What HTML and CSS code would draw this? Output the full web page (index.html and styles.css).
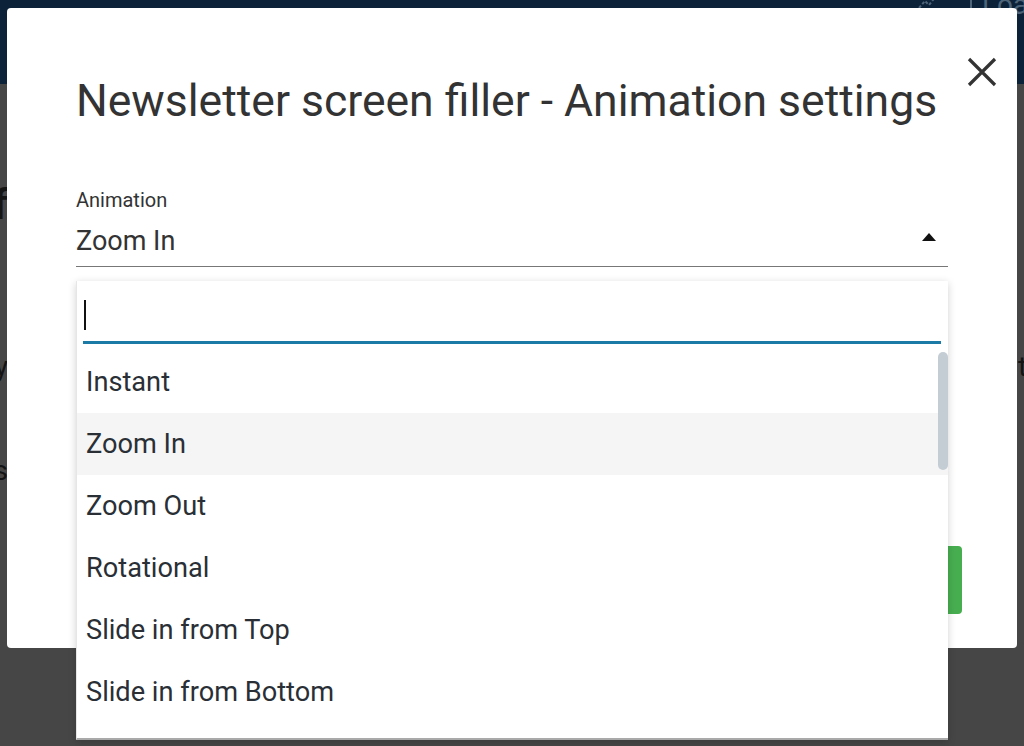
FILE: index.html
```html
<!DOCTYPE html>
<html lang="en">
<head>
<meta charset="utf-8">
<title>Newsletter screen filler - Animation settings</title>
<link rel="stylesheet" href="styles.css">
</head>
<body>
  <header class="topbar">
    <div class="topbar-tools">
      <svg class="chart-icon" width="22" height="20" viewBox="0 0 22 20"><path d="M1 16 L7 9 L11 13 L19 3" fill="none" stroke="#4d6479" stroke-width="2" stroke-dasharray="3 2"/></svg>
      <span class="divider"></span>
      <span class="load">Load</span>
    </div>
  </header>

  <main class="page">
    <div class="row row-1"><span class="frag-left big">Of</span></div>
    <div class="row row-2"><span class="frag-left mid">Day</span><span class="frag-right mid">to</span></div>
    <div class="row row-3"><span class="frag-left mid">Items</span></div>
  </main>

  <section class="modal">
    <button class="close" aria-label="Close">
      <svg width="30" height="30" viewBox="0 0 30 30"><path d="M2 2 L28 28 M28 2 L2 28" stroke="#333" stroke-width="3.2" stroke-linecap="butt"/></svg>
    </button>
    <h1 class="title">Newsletter screen filler - Animation settings</h1>
    <div class="field">
      <label class="field-label">Animation</label>
      <div class="select">
        <span class="select-value">Zoom In</span>
        <span class="caret-up"></span>
      </div>
    </div>
    <div class="footer">
      <button class="save">Save</button>
    </div>
  </section>

  <div class="dropdown">
    <div class="search"><span class="text-cursor"></span></div>
    <div class="list-wrap">
      <ul class="list">
        <li>Instant</li>
        <li class="active">Zoom In</li>
        <li>Zoom Out</li>
        <li>Rotational</li>
        <li>Slide in from Top</li>
        <li>Slide in from Bottom</li>
        <li>Slide in from Left</li>
        <li>Slide in from Right</li>
      </ul>
      <div class="thumb"></div>
    </div>
  </div>
</body>
</html>
```

FILE: styles.css
```css
* { box-sizing: border-box; }
html, body { margin: 0; padding: 0; }
body {
  width: 1024px;
  height: 746px;
  overflow: hidden;
  background: #464646;
  font-family: Roboto, "Noto Sans", Arial, sans-serif;
  position: relative;
}

.topbar {
  height: 84px;
  background: #0c2238;
  display: flex;
  justify-content: flex-end;
}
.topbar-tools {
  display: flex;
  align-items: flex-start;
  margin-right: -20px;
  margin-top: -10px;
  gap: 10px;
}
.chart-icon { margin-top: 2px; margin-right: 20px; }
.divider { width: 2px; height: 30px; background: #4d6479; margin-top: 2px; }
.load { color: #4d6479; font-size: 28px; line-height: 30px; }

.page { color: #141414; }
.row { display: flex; justify-content: space-between; }
.frag-left {
  width: 200px;
  margin-left: -192px;
  text-align: right;
  white-space: nowrap;
}
.frag-right {
  width: 200px;
  margin-right: -194px;
  text-align: left;
  white-space: nowrap;
}
.big { font-size: 42px; line-height: 50px; font-weight: 500; }
.mid { font-size: 28px; line-height: 34px; }
.row-1 { margin-top: 96px; }
.row-2 { margin-top: 120px; }
.row-3 { margin-top: 70px; }

.modal {
  position: absolute;
  left: 7px;
  top: 8px;
  width: 1010px;
  height: 640px;
  background: #fff;
  border-radius: 4px;
  padding: 67px 69px 34px;
  display: flex;
  flex-direction: column;
}
.close {
  position: absolute;
  right: 20px;
  top: 49px;
  width: 30px;
  height: 30px;
  padding: 0;
  border: 0;
  background: none;
}
.close svg { display: block; }

.title {
  margin: 0;
  font-size: 44.5px;
  line-height: 52px;
  font-weight: 400;
  color: #333;
  white-space: nowrap;
}

.field { margin-top: 61px; }
.field-label {
  display: block;
  font-size: 20px;
  line-height: 24px;
  color: #333;
}
.select {
  margin-top: 13px;
  display: flex;
  justify-content: space-between;
  align-items: flex-start;
  padding-bottom: 9px;
  border-bottom: 1px solid #777;
}
.select-value {
  font-size: 27px;
  line-height: 32px;
  color: #333;
}
.caret-up {
  width: 0;
  height: 0;
  border-left: 7px solid transparent;
  border-right: 7px solid transparent;
  border-bottom: 8px solid #111;
  margin-top: 8px;
  margin-right: 12px;
}

.footer {
  margin-top: auto;
  display: flex;
  justify-content: flex-end;
  margin-right: -14px;
}
.save {
  width: 150px;
  height: 68px;
  border: 0;
  border-radius: 4px;
  background: #47ae50;
  color: #fff;
  font-family: inherit;
  font-size: 22px;
}

.dropdown {
  position: absolute;
  left: 76px;
  top: 281px;
  width: 872px;
  height: 459px;
  background: #fff;
  border-left: 1px solid #e6e6e6;
  border-bottom: 2px solid #a9a9a9;
  box-shadow: 0 2px 8px rgba(0, 0, 0, 0.18);
  display: flex;
  flex-direction: column;
}
.search {
  margin: 7px 7px 0 6px;
  height: 56px;
  border-bottom: 3px solid #1b7aa6;
  padding-left: 1px;
}
.text-cursor {
  display: block;
  width: 2px;
  height: 30px;
  margin-top: 12px;
  background: #111;
}
.list-wrap {
  position: relative;
  flex: 1;
  overflow: hidden;
  margin-top: 7px;
}
.list {
  list-style: none;
  margin: 0;
  padding: 0;
}
.list li {
  height: 62px;
  line-height: 62px;
  padding-left: 9px;
  font-size: 27.2px;
  color: #2a2f36;
  white-space: nowrap;
}
.list li.active { background: #f5f5f5; }
.thumb {
  position: absolute;
  right: 0;
  top: 1px;
  width: 10px;
  height: 118px;
  border-radius: 5px;
  background: #c4cdd4;
}
```
